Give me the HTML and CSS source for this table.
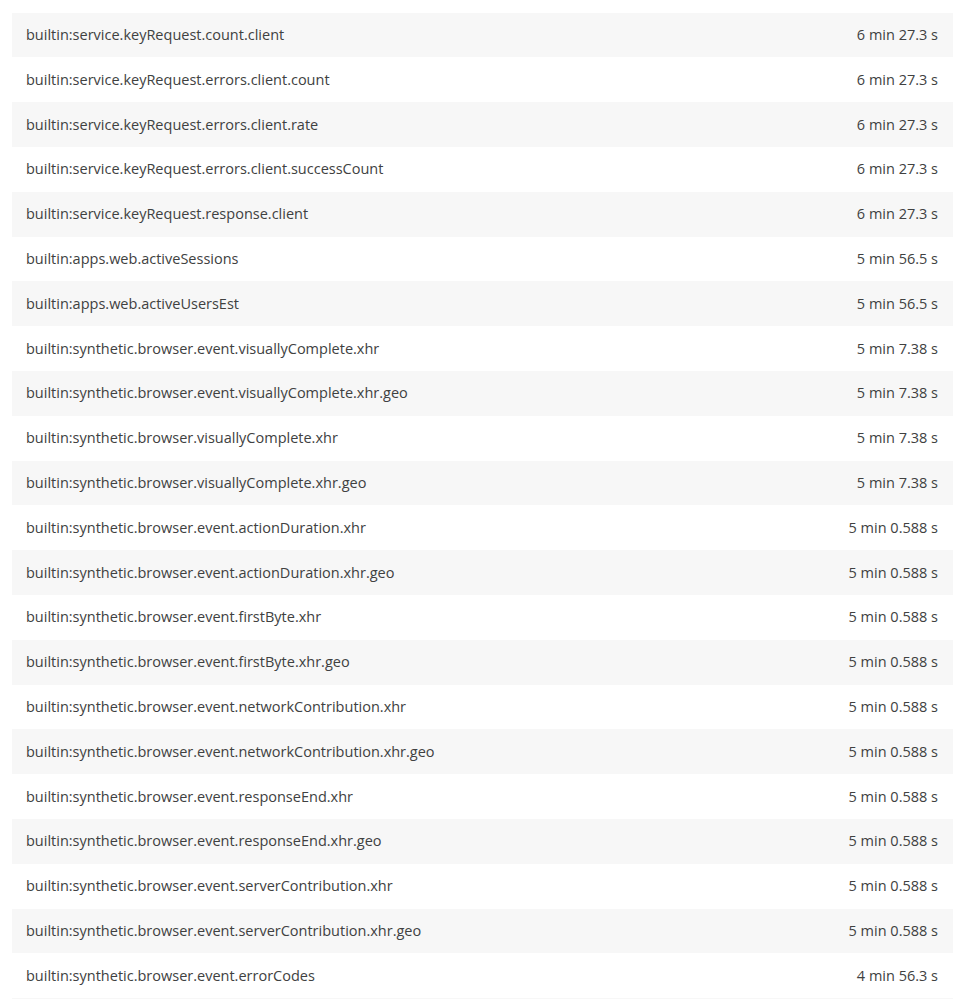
FILE: index.html
```html
<!DOCTYPE html>
<html>
<head>
<meta charset="utf-8">
<link rel="stylesheet" href="styles.css">
</head>
<body>
<div class="table">
  <div class="row"><span class="name">builtin:service.keyRequest.count.client</span><span class="val">6 min 27.3 s</span></div>
  <div class="row"><span class="name">builtin:service.keyRequest.errors.client.count</span><span class="val">6 min 27.3 s</span></div>
  <div class="row"><span class="name">builtin:service.keyRequest.errors.client.rate</span><span class="val">6 min 27.3 s</span></div>
  <div class="row"><span class="name">builtin:service.keyRequest.errors.client.successCount</span><span class="val">6 min 27.3 s</span></div>
  <div class="row"><span class="name">builtin:service.keyRequest.response.client</span><span class="val">6 min 27.3 s</span></div>
  <div class="row"><span class="name">builtin:apps.web.activeSessions</span><span class="val">5 min 56.5 s</span></div>
  <div class="row"><span class="name">builtin:apps.web.activeUsersEst</span><span class="val">5 min 56.5 s</span></div>
  <div class="row"><span class="name">builtin:synthetic.browser.event.visuallyComplete.xhr</span><span class="val">5 min 7.38 s</span></div>
  <div class="row"><span class="name">builtin:synthetic.browser.event.visuallyComplete.xhr.geo</span><span class="val">5 min 7.38 s</span></div>
  <div class="row"><span class="name">builtin:synthetic.browser.visuallyComplete.xhr</span><span class="val">5 min 7.38 s</span></div>
  <div class="row"><span class="name">builtin:synthetic.browser.visuallyComplete.xhr.geo</span><span class="val">5 min 7.38 s</span></div>
  <div class="row"><span class="name">builtin:synthetic.browser.event.actionDuration.xhr</span><span class="val">5 min 0.588 s</span></div>
  <div class="row"><span class="name">builtin:synthetic.browser.event.actionDuration.xhr.geo</span><span class="val">5 min 0.588 s</span></div>
  <div class="row"><span class="name">builtin:synthetic.browser.event.firstByte.xhr</span><span class="val">5 min 0.588 s</span></div>
  <div class="row"><span class="name">builtin:synthetic.browser.event.firstByte.xhr.geo</span><span class="val">5 min 0.588 s</span></div>
  <div class="row"><span class="name">builtin:synthetic.browser.event.networkContribution.xhr</span><span class="val">5 min 0.588 s</span></div>
  <div class="row"><span class="name">builtin:synthetic.browser.event.networkContribution.xhr.geo</span><span class="val">5 min 0.588 s</span></div>
  <div class="row"><span class="name">builtin:synthetic.browser.event.responseEnd.xhr</span><span class="val">5 min 0.588 s</span></div>
  <div class="row"><span class="name">builtin:synthetic.browser.event.responseEnd.xhr.geo</span><span class="val">5 min 0.588 s</span></div>
  <div class="row"><span class="name">builtin:synthetic.browser.event.serverContribution.xhr</span><span class="val">5 min 0.588 s</span></div>
  <div class="row"><span class="name">builtin:synthetic.browser.event.serverContribution.xhr.geo</span><span class="val">5 min 0.588 s</span></div>
  <div class="row"><span class="name">builtin:synthetic.browser.event.errorCodes</span><span class="val">4 min 56.3 s</span></div>
  <div class="row"><span class="name">&nbsp;</span><span class="val">&nbsp;</span></div>
</div>
</body>
</html>
```
FILE: styles.css
```css
html, body {
  margin: 0;
  padding: 0;
  background: #ffffff;
}
body {
  font-family: "Open Sans", "Noto Sans", sans-serif;
  font-size: 14.5px;
  color: #404141;
}
.table {
  padding: 12.7px 16px 0 12px;
}
.row {
  display: flex;
  justify-content: space-between;
  align-items: center;
  height: 44.8px;
  padding: 0 15px 1px 14px;
  box-sizing: border-box;
}
.row:nth-child(odd) {
  background: #f7f7f7;
}
.val {
  white-space: nowrap;
}
```
